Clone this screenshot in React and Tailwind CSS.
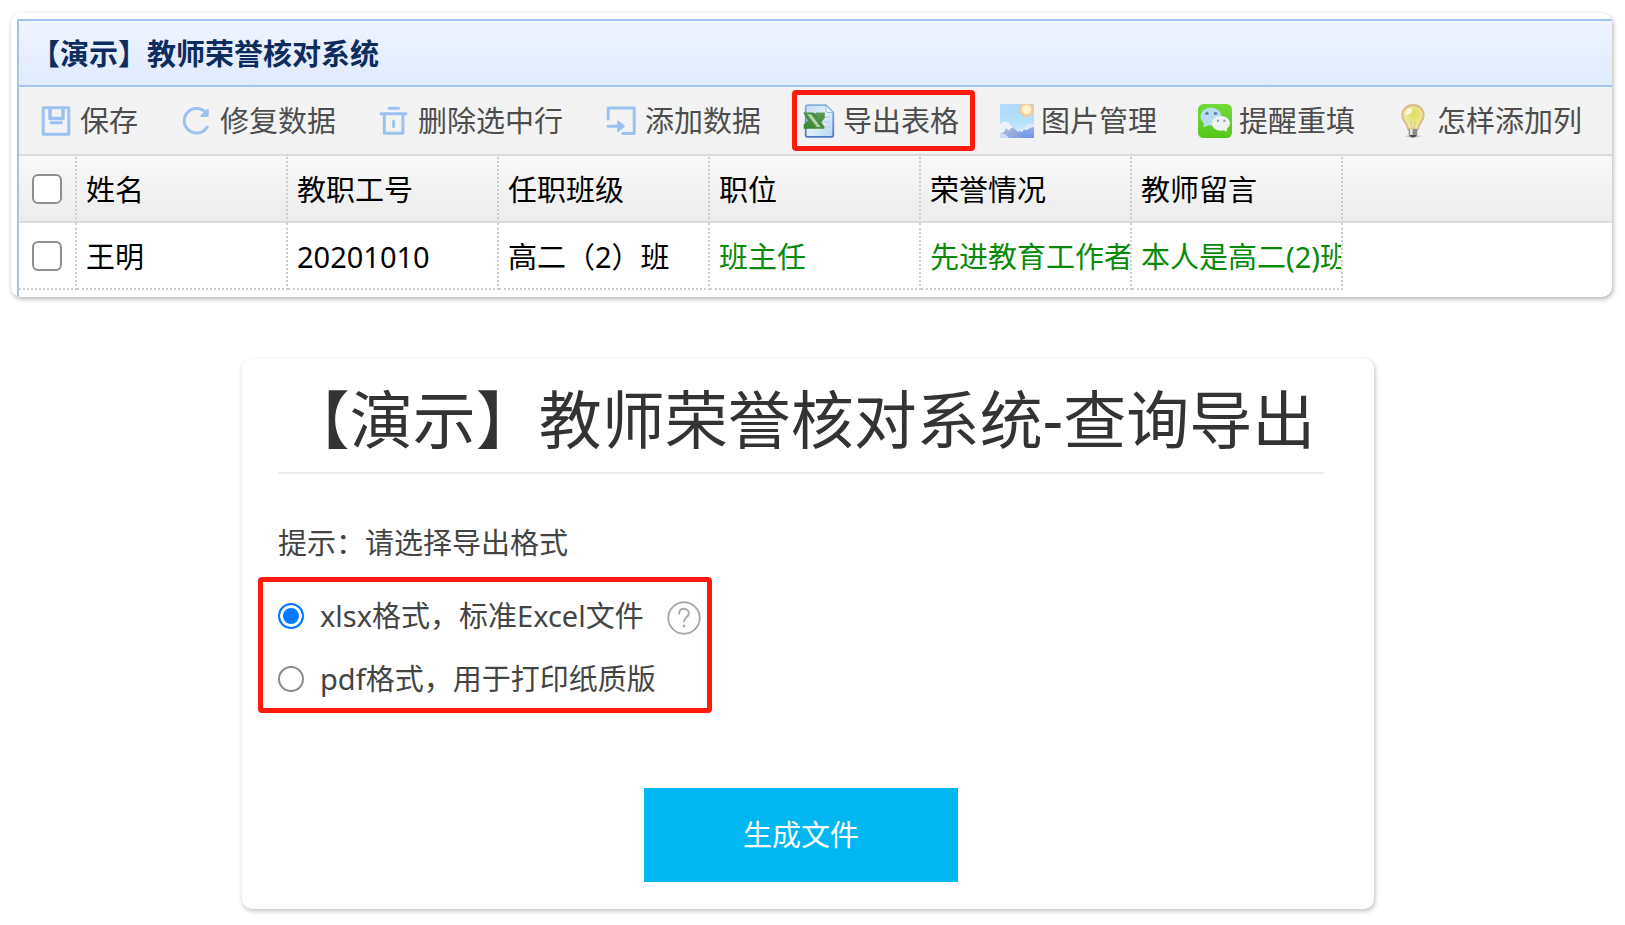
import { useState } from 'react';

function SaveIcon() {
    return (
        <svg viewBox="0 0 34 34" className="size-[34px] shrink-0" fill="none" stroke="#9dc1f0" strokeWidth="3" strokeLinejoin="round" aria-hidden="true">
            <path d="M4.2 3.8h25.6v26.4H4.2z" />
            <path d="M11 4v10.5h13V4" strokeWidth="3.6" />
            <path d="M11 18.8h12.5" />
        </svg>
    );
}

function RefreshIcon() {
    return (
        <svg viewBox="0 0 34 34" className="size-[34px] shrink-0" fill="none" stroke="#9dc1f0" strokeWidth="3" strokeLinecap="round" aria-hidden="true">
            <path d="M28.2 23A12.3 12.3 0 1 1 26.4 8.2" />
            <path d="M28.8 5.6v6.4h-6.6z" fill="#9dc1f0" stroke="#9dc1f0" strokeWidth="1.8" strokeLinejoin="round" />
        </svg>
    );
}

function TrashIcon() {
    return (
        <svg viewBox="0 0 34 34" className="size-[34px] shrink-0" fill="none" stroke="#9dc1f0" strokeWidth="3" strokeLinecap="round" strokeLinejoin="round" aria-hidden="true">
            <path d="M12 4.3h9.5" />
            <path d="M4 9.7h25" />
            <path d="M7.3 10v19.3h18.6V10" />
            <path d="M16.6 17v5.5" />
        </svg>
    );
}

function AddIcon() {
    return (
        <svg viewBox="0 0 34 34" className="size-[34px] shrink-0" fill="none" stroke="#9dc1f0" strokeWidth="3" strokeLinecap="round" strokeLinejoin="round" aria-hidden="true">
            <path d="M4.2 15V4h26v25.5H18.8" />
            <path d="M4.2 22.3H15" />
            <path d="M14 17.4v9.8l6-4.9z" fill="#9dc1f0" strokeWidth="1.8" />
        </svg>
    );
}

function ExcelIcon() {
    return (
        <svg viewBox="0 0 34 34" className="size-[34px] shrink-0" aria-hidden="true">
            <defs>
                <linearGradient id="sheet" x1="0" y1="0" x2="1" y2="1">
                    <stop offset="0" stopColor="#c4dcf4" />
                    <stop offset="0.5" stopColor="#e2effb" />
                    <stop offset="1" stopColor="#b3d3f3" />
                </linearGradient>
                <linearGradient id="sheetEdge" x1="0" y1="0" x2="0" y2="1">
                    <stop offset="0" stopColor="#86aede" />
                    <stop offset="1" stopColor="#4a78c2" />
                </linearGradient>
                <linearGradient id="leaf" x1="0" y1="0" x2="0" y2="1">
                    <stop offset="0" stopColor="#5c9c56" />
                    <stop offset="1" stopColor="#39852f" />
                </linearGradient>
            </defs>
            <path d="M5.5 1.2H24L31.3 8.5V31q0 1.8-1.8 1.8h-24q-1.8 0-1.8-1.8V3q0-1.8 1.8-1.8z" fill="url(#sheet)" stroke="url(#sheetEdge)" strokeWidth="1.8" />
            <path d="M24 1.6v5.2q0 1.6 1.6 1.6H31z" fill="#fafdff" stroke="#8fb4e2" strokeWidth="1" />
            <path d="M20 13h8M20 18h8M20 23h8" stroke="#bfd9f2" strokeWidth="2" />
            <path d="M22.8 8.4h-8.6L1.6 20.5v4.3H14L22.8 14z" fill="url(#leaf)" />
            <path d="M1.2 8.4h10.6l10.6 14.2v2.2h-8.8L5.4 16z" fill="#478f42" />
            <path d="M5 10.2h4.2l9.4 12.8H15z" fill="#b4d5a6" />
        </svg>
    );
}

function PictureIcon() {
    return (
        <svg viewBox="0 0 34 34" className="size-[34px] shrink-0" aria-hidden="true">
            <defs>
                <linearGradient id="sky" x1="0" y1="0" x2="0" y2="1">
                    <stop offset="0" stopColor="#aed9fb" />
                    <stop offset="0.55" stopColor="#b5e3fd" />
                    <stop offset="1" stopColor="#d9f3ff" />
                </linearGradient>
                <linearGradient id="slope" x1="0" y1="0" x2="1" y2="1">
                    <stop offset="0" stopColor="#b9cbea" />
                    <stop offset="1" stopColor="#7f9bd6" />
                </linearGradient>
                <linearGradient id="slopeRight" x1="0" y1="0" x2="0" y2="1">
                    <stop offset="0" stopColor="#9fb7e6" />
                    <stop offset="1" stopColor="#7292e8" />
                </linearGradient>
                <radialGradient id="sun">
                    <stop offset="0" stopColor="#fffbe6" />
                    <stop offset="0.5" stopColor="#fff0c4" />
                    <stop offset="0.75" stopColor="#fbc390" />
                    <stop offset="1" stopColor="#f8c5a8" stopOpacity="0.4" />
                </radialGradient>
            </defs>
            <path d="M0 0h34v34H0z" fill="url(#sky)" />
            <circle cx="26.6" cy="5.6" r="7.8" fill="url(#sun)" />
            <path d="M15 31l11-10q4-3 8-1v14H15z" fill="url(#slopeRight)" />
            <path d="M19 27l7-6q4-3 8-1v3l-4 1-3 2-3-.5-2 2.500z" fill="#dfeaf9" />
            <path d="M0 20q5-5 10 0l14 14H0z" fill="url(#slope)" />
            <path d="M0 20q5-5 10 0l4 4.500-3-.8-2 3-3-2.700-2 4-4 1.500z" fill="#edf3fb" />
            <path d="M0 29.500q4-1.500 9 4.500H0z" fill="#cfdcf6" />
        </svg>
    );
}

function WechatIcon() {
    return (
        <svg viewBox="0 0 34 34" className="size-[34px] shrink-0" aria-hidden="true">
            <defs>
                <linearGradient id="chat" x1="0" y1="0" x2="0" y2="1">
                    <stop offset="0" stopColor="#72db37" />
                    <stop offset="1" stopColor="#57c71b" />
                </linearGradient>
            </defs>
            <rect width="34" height="34" rx="5.5" fill="url(#chat)" />
            <ellipse cx="13" cy="12.5" rx="10.6" ry="9" fill="#b6dcf4" />
            <path d="M6 18l-.6 5.500 6-2.600z" fill="#b6dcf4" />
            <ellipse cx="22.8" cy="19.3" rx="9.2" ry="7.4" fill="#eef3f6" />
            <path d="M24 25.400l5 2.400-.6-4.600z" fill="#eef3f6" />
            <circle cx="9" cy="9.4" r="1.7" fill="#5f87a6" />
            <circle cx="17.4" cy="9.4" r="1.7" fill="#5f87a6" />
            <circle cx="20" cy="16.8" r="1.2" fill="#97a4ac" />
            <circle cx="26.4" cy="16.8" r="1.2" fill="#97a4ac" />
        </svg>
    );
}

function BulbIcon() {
    return (
        <svg viewBox="0 0 34 34" className="size-[34px] shrink-0" aria-hidden="true">
            <defs>
                <radialGradient id="glow" cx="0.55" cy="0.4" r="0.6">
                    <stop offset="0" stopColor="#dcdc5c" />
                    <stop offset="0.6" stopColor="#ece68f" />
                    <stop offset="1" stopColor="#f1e2ad" />
                </radialGradient>
                <radialGradient id="floor">
                    <stop offset="0" stopColor="#777" />
                    <stop offset="1" stopColor="#ccc" stopOpacity="0" />
                </radialGradient>
            </defs>
            <ellipse cx="17" cy="32.3" rx="10.5" ry="1.7" fill="url(#floor)" />
            <path d="M17 1C10.6 1 6.3 5.6 6.3 11.2c0 5.6 4.6 7.6 6 14.3h9.4c1.4-6.7 6-8.7 6-14.3C27.7 5.6 23.4 1 17 1z" fill="url(#glow)" stroke="#d9b98a" strokeWidth="1.8" />
            <path d="M9.3 11c0-4 3-6.8 6.4-7 1.5 2.5-.6 7-6.4 7z" fill="#fbf9dc" />
            <path d="M14.8 17l1 8h2.4l1-8" fill="none" stroke="#d3cf78" strokeWidth="1" />
            <path d="M12.7 25h8.6v5.2q0 2.6-4.3 3-4.3-.4-4.3-3z" fill="#8c8c8c" />
            <path d="M14 25h2.6v6.5H14z" fill="#e3e3e3" />
            <path d="M13.6 31h6.8q-.4 2.4-3.4 2.4t-3.4-2.4z" fill="#4d4d4d" />
        </svg>
    );
}

function HelpIcon() {
    return (
        <svg viewBox="0 0 34 34" className="size-[34px]" fill="none" stroke="#a9a9a9" strokeWidth="1.9" strokeLinecap="round" aria-hidden="true">
            <circle cx="17" cy="17" r="15.7" />
            <path d="M12.2 12.7c0-3 2-4.9 4.8-4.9s4.8 1.9 4.8 4.5c0 4-4.8 4-4.8 8.2" />
            <path d="M17 24.8v.4" strokeWidth="2.4" />
        </svg>
    );
}

const actions = [
    { label: '保存', Icon: SaveIcon },
    { label: '修复数据', Icon: RefreshIcon },
    { label: '删除选中行', Icon: TrashIcon },
    { label: '添加数据', Icon: AddIcon },
    { label: '导出表格', Icon: ExcelIcon, marked: true },
    { label: '图片管理', Icon: PictureIcon },
    { label: '提醒重填', Icon: WechatIcon },
    { label: '怎样添加列', Icon: BulbIcon },
];

const columns = ['姓名', '教职工号', '任职班级', '职位', '荣誉情况', '教师留言'];

const rows = [
    [
        { text: '王明' },
        { text: '20201010' },
        { text: '高二（2）班' },
        { text: '班主任', filled: true },
        { text: '先进教育工作者', filled: true },
        { text: '本人是高二(2)班', filled: true },
    ],
];

const formats = [
    { value: 'xlsx', label: 'xlsx格式，标准Excel文件', help: true },
    { value: 'pdf', label: 'pdf格式，用于打印纸质版' },
];

function Checkbox({ label }) {
    return (
        <input
            type="checkbox"
            aria-label={label}
            className="block size-[30px] ml-[13px] appearance-none rounded-md border-2 border-[#8f8f8f] bg-white checked:bg-[#007aff]"
        />
    );
}

export default function App() {
    const [format, setFormat] = useState('xlsx');

    return (
        <main className="pl-[11px] pr-[13px] pt-[13px] pb-4 bg-white font-['Noto_Sans','Noto_Sans_CJK_SC',sans-serif] text-[29px] leading-[40px]">
            {/* Données */}
            <section className="pl-[6px] pt-[6px] rounded-[10px] overflow-hidden shadow-[1px_2px_5px_rgba(0,0,0,0.3)]">
                <div className="border-l-2 border-t-2 border-[#a3c4f2] pb-[7px]">
                    <h1 className="h-[66px] flex items-center pl-[12px] pt-[2px] border-b-2 border-[#a3c4f2] bg-linear-to-b from-[#eff4ff] to-[#e0ebff] font-bold text-[#0e2d5f] whitespace-nowrap">
                        【演示】教师荣誉核对系统
                    </h1>

                    <div className="h-[67px] flex items-center gap-[15px] pl-[10px] bg-[#f3f3f3] text-[#4d4d4d] overflow-hidden">
                        {actions.map(({ label, Icon, marked }) => (
                            <button
                                key={label}
                                type="button"
                                className={`h-[61px] shrink-0 flex items-center gap-[7px] pl-[5px] pr-[11px] border-5 rounded-sm whitespace-nowrap ${marked ? 'border-[#ff1a0c]' : 'border-transparent'}`}
                            >
                                <Icon />
                                {label}
                            </button>
                        ))}
                    </div>

                    <table className="w-full table-fixed border-separate border-spacing-0 text-black">
                        <colgroup>
                            <col className="w-[58px]" />
                            {columns.map((name) => (
                                <col key={name} className="w-[211px]" />
                            ))}
                            <col />
                        </colgroup>
                        <thead className="bg-linear-to-b from-[#f9f9f9] to-[#ececec]">
                            <tr className="h-[69px]">
                                <th className="p-0 border-y-2 border-y-[#dddddd] border-r-2 border-r-[#cccccc] [border-right-style:dotted]">
                                    <Checkbox label="全选" />
                                </th>
                                {columns.map((name) => (
                                    <th key={name} className="p-0 pt-[2px] pl-[9px] text-left font-normal border-y-2 border-y-[#dddddd] border-r-2 border-r-[#cccccc] [border-right-style:dotted]">
                                        {name}
                                    </th>
                                ))}
                                <th className="p-0 border-y-2 border-[#dddddd]"></th>
                            </tr>
                        </thead>
                        <tbody>
                            {rows.map((row, i) => (
                                <tr key={i} className="h-[67px]">
                                    <td className="p-0 border-r-2 border-b-2 border-dotted border-[#cccccc]">
                                        <Checkbox label={row[0].text} />
                                    </td>
                                    {row.map((cell, j) => (
                                        <td
                                            key={j}
                                            className={`p-0 pt-[2px] pl-[9px] overflow-hidden whitespace-nowrap border-r-2 border-b-2 border-dotted border-[#cccccc] ${cell.filled ? 'text-[#078a07]' : ''}`}
                                        >
                                            {cell.text}
                                        </td>
                                    ))}
                                    <td></td>
                                </tr>
                            ))}
                        </tbody>
                    </table>
                </div>
            </section>

            {/* Export */}
            <div className="mt-[62px] pr-[7px]">
                <section className="max-w-[1132px] mx-auto pl-[36px] pr-[50px] pb-[27px] rounded-[10px] text-[#444444] shadow-[1px_2px_5px_rgba(0,0,0,0.26)]">
                    <h2 className="pt-[14px] pb-[7px] border-b-2 border-[#ececec] text-center text-[63px] leading-[92px] text-[#333333] whitespace-nowrap">
                        【演示】教师荣誉核对系统-查询导出
                    </h2>

                    <form onSubmit={(e) => e.preventDefault()}>
                        <p className="mt-[49px]">提示：请选择导出格式</p>

                        <div
                            role="radiogroup"
                            aria-label="导出格式"
                            className="w-[454px] mt-[14px] -ml-[20px] flex flex-col gap-[11px] pl-[15px] pt-[8px] pb-[3px] border-5 border-[#ff1a0c] rounded-sm"
                        >
                            {formats.map(({ value, label, help }) => (
                                <div key={value} className="h-[52px] flex items-center whitespace-nowrap">
                                    <input
                                        id={value}
                                        type="radio"
                                        name="format"
                                        value={value}
                                        checked={format === value}
                                        onChange={() => setFormat(value)}
                                        className="size-[26px] shrink-0 appearance-none rounded-full border-2 border-[#8a8a8a] bg-white checked:border-[#007aff] checked:bg-[#007aff] checked:shadow-[inset_0_0_0_3px_white]"
                                    />
                                    <label htmlFor={value} className="pl-[16px]">{label}</label>
                                    {help && (
                                        <button type="button" aria-label="帮助" className="ml-auto mr-[6px] pt-[4px]">
                                            <HelpIcon />
                                        </button>
                                    )}
                                </div>
                            ))}
                        </div>

                        <button type="submit" className="block w-[314px] h-[94px] mt-[75px] mx-auto bg-[#00b7f1] text-white">
                            生成文件
                        </button>
                    </form>
                </section>
            </div>
        </main>
    );
}
